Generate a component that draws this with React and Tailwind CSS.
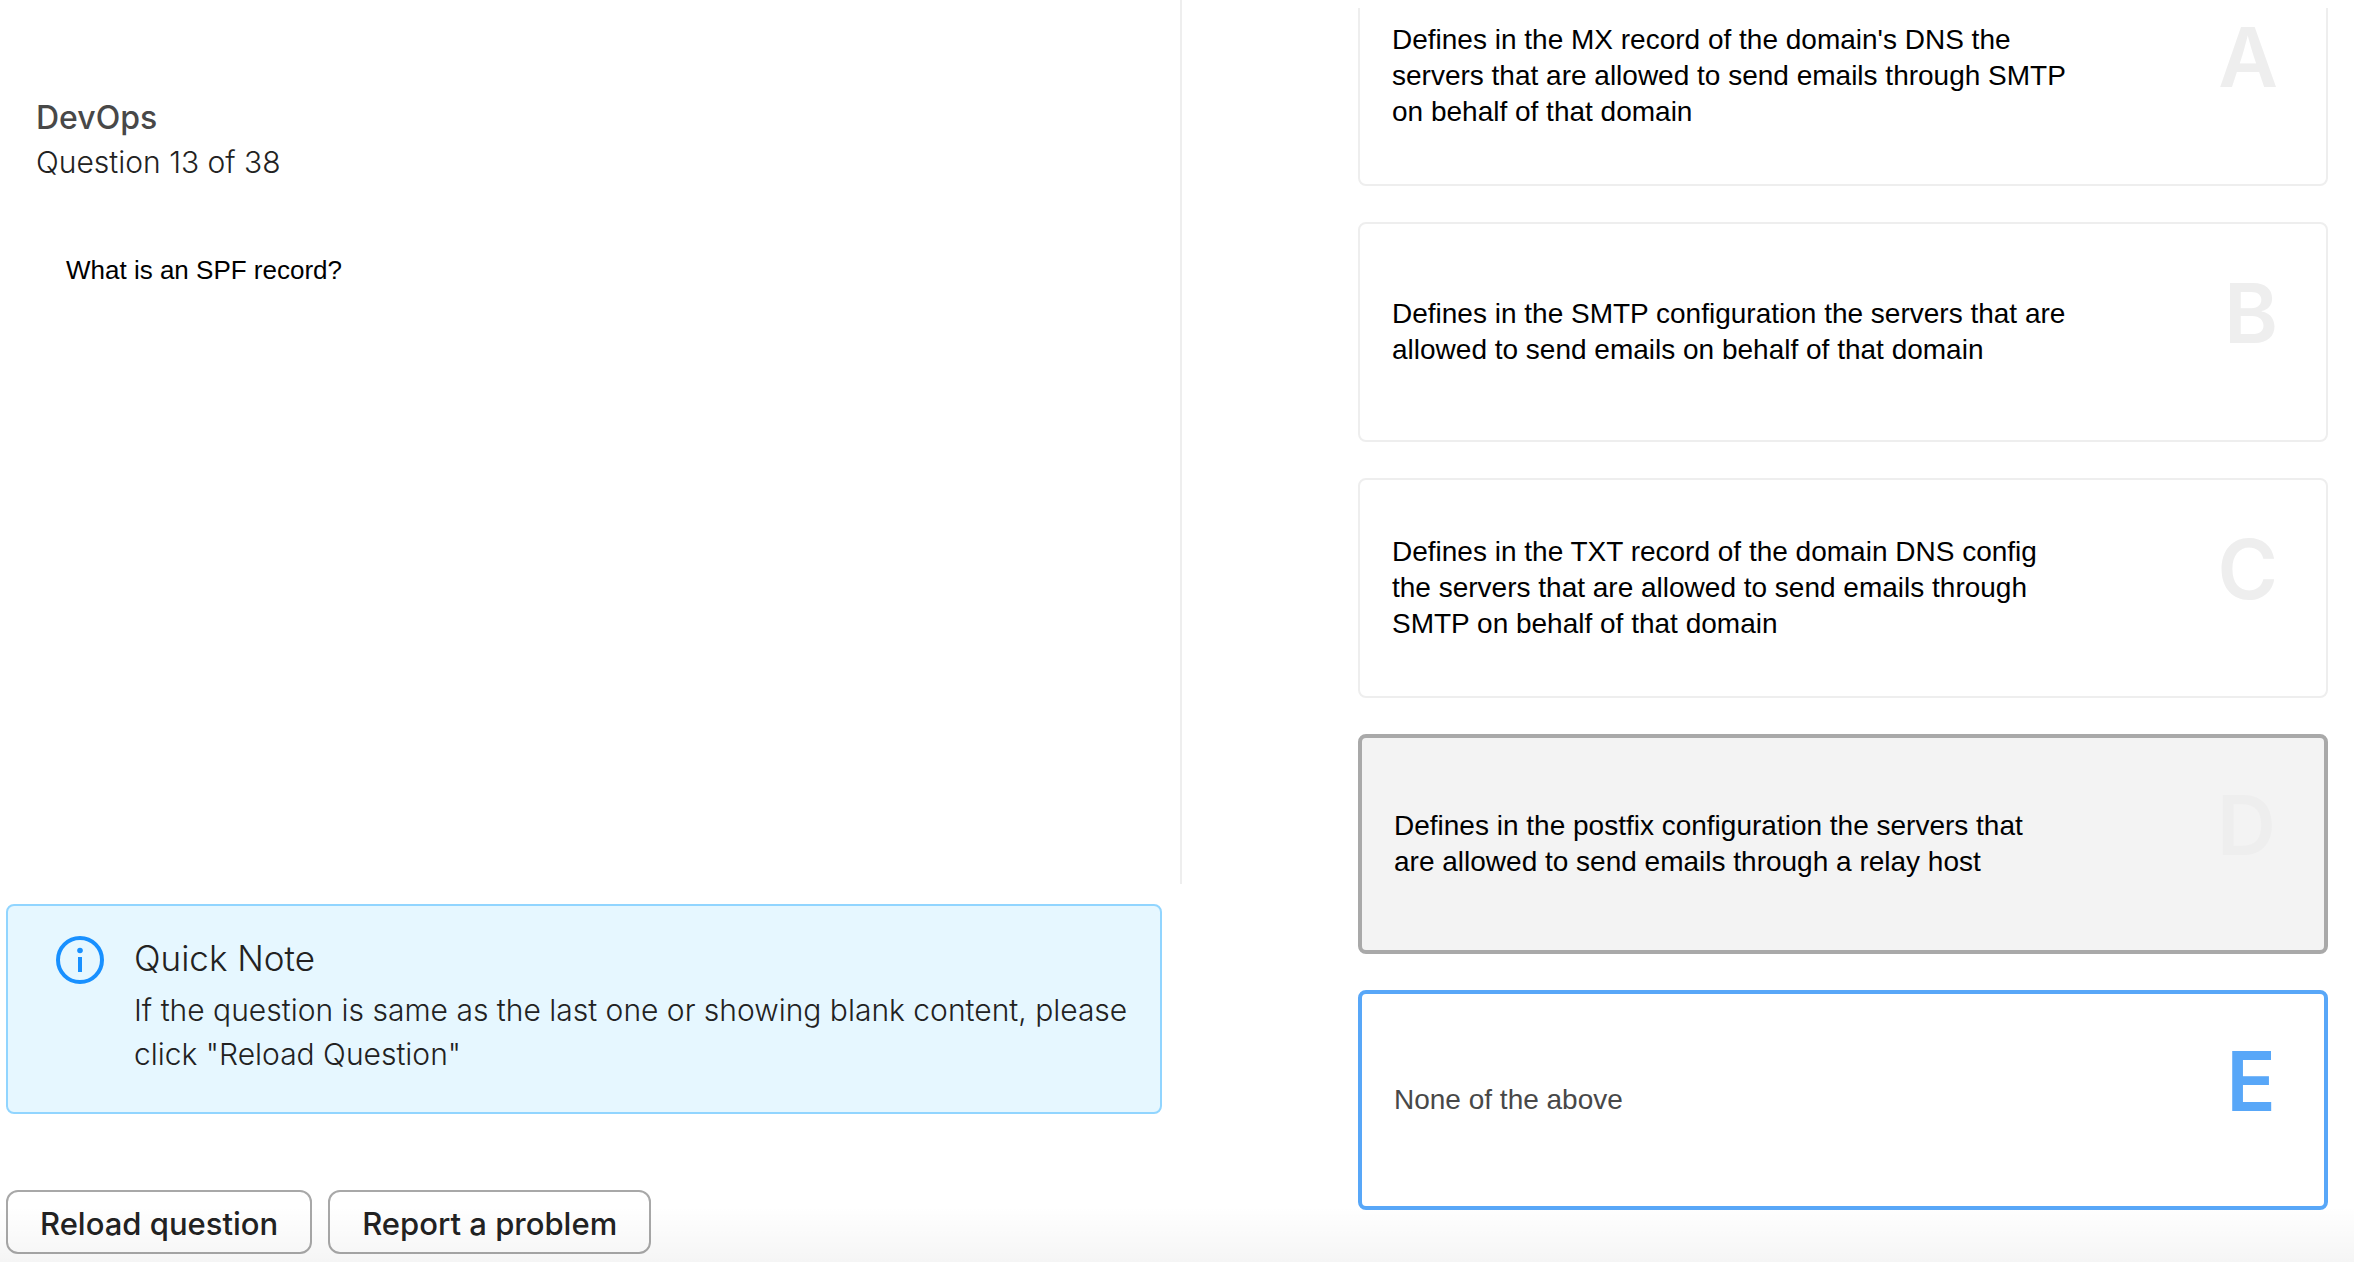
import { useState } from "react";

const OPTIONS = [
  {
    letter: "A",
    text: "Defines in the MX record of the domain's DNS the servers that are allowed to send emails through SMTP on behalf of that domain",
  },
  {
    letter: "B",
    text: "Defines in the SMTP configuration the servers that are allowed to send emails on behalf of that domain",
  },
  {
    letter: "C",
    text: "Defines in the TXT record of the domain DNS config the servers that are allowed to send emails through SMTP on behalf of that domain",
  },
  {
    letter: "D",
    text: "Defines in the postfix configuration the servers that are allowed to send emails through a relay host",
  },
  { letter: "E", text: "None of the above" },
];

const CARD_STYLES = {
  idle: "border-2 border-[#eeeeee] bg-white text-black",
  active: "border-4 border-[#a9a9a9] bg-[#f3f3f3] text-black",
  selected: "border-4 border-[#58a7f8] bg-white text-[#484848]",
};

function InfoIcon() {
  return (
    <svg className="size-12 shrink-0" viewBox="0 0 48 48" fill="none" aria-hidden="true">
      <circle cx="24" cy="24" r="22" stroke="#1890ff" strokeWidth="4" />
      <circle cx="24" cy="14.5" r="2.8" fill="#1890ff" />
      <rect x="22" y="21" width="4" height="15" fill="#1890ff" />
    </svg>
  );
}

function OptionCard({ option, state, onSelect, onHover }) {
  return (
    <label
      className={`relative flex min-h-[220px] cursor-pointer items-center rounded-lg px-8 ${CARD_STYLES[state]}`}
      onMouseEnter={() => onHover(option.letter)}
    >
      <input
        type="radio"
        name="answer"
        value={option.letter}
        checked={state === "selected"}
        onChange={() => onSelect(option.letter)}
        className="sr-only"
      />
      <span className="flex-1 text-[28px] leading-9">{option.text}</span>
      <span
        aria-hidden="true"
        className={`w-[226px] pr-4 pb-9 text-right font-[Inter,sans-serif] text-[82px] leading-none font-semibold ${
          state === "selected" ? "text-[#58a7f8]" : "text-[#eeeeee]"
        }`}
      >
        {option.letter}
      </span>
    </label>
  );
}

function OutlineButton({ children }) {
  return (
    <button
      type="button"
      className="h-16 rounded-xl border-2 border-[#a8a8a8] px-8 pt-1 text-[31px] leading-11 font-medium text-[#222222]"
    >
      {children}
    </button>
  );
}

export default function App() {
  const [selected, setSelected] = useState("E");
  const [hovered, setHovered] = useState("D");

  const stateOf = (letter) => {
    if (letter === selected) return "selected";
    return letter === hovered ? "active" : "idle";
  };

  return (
    <div className="relative grid h-screen grid-cols-[591fr_586fr] overflow-hidden bg-white">
      <section className="flex min-h-0 flex-col pb-2 font-[Inter,sans-serif]">
        <div className="flex-1 border-r-2 border-[#eeeeee] px-9 pt-24">
          <h1 className="text-[32px] leading-11 font-medium text-[#484848]">DevOps</h1>
          <p className="text-[30px] leading-11 font-light text-[#222222]">Question 13 of 38</p>
          <p
            id="question"
            className="mt-17 pl-[30px] font-['Liberation_Sans',Arial,sans-serif] text-[26px] leading-9 text-black"
          >
            What is an SPF record?
          </p>
        </div>

        <div
          role="note"
          className="mt-5 mr-5 ml-1.5 flex gap-[30px] rounded-lg border-2 border-[#91d5ff] bg-[#e6f7ff] pt-[30px] pr-4 pb-9 pl-12 text-[#222222]"
        >
          <InfoIcon />
          <div className="font-light">
            <h2 className="text-[35px] leading-11">Quick Note</h2>
            <p className="mt-2 text-[30px] leading-11">
              If the question is same as the last one or showing blank content, please click "Reload Question"
            </p>
          </div>
        </div>

        <div className="mt-19 ml-1.5 flex gap-4">
          <OutlineButton>Reload question</OutlineButton>
          <OutlineButton>Report a problem</OutlineButton>
        </div>
      </section>

      <section className="mt-2 min-h-0 overflow-hidden pr-[26px] pl-44 font-['Liberation_Sans',Arial,sans-serif]">
        <fieldset aria-labelledby="question" className="-mt-[42px] flex flex-col gap-9">
          {OPTIONS.map((option) => (
            <OptionCard
              key={option.letter}
              option={option}
              state={stateOf(option.letter)}
              onSelect={setSelected}
              onHover={setHovered}
            />
          ))}
        </fieldset>
      </section>

      <div className="pointer-events-none absolute inset-x-0 bottom-0 h-14 bg-linear-to-b from-transparent to-black/4" />
    </div>
  );
}
